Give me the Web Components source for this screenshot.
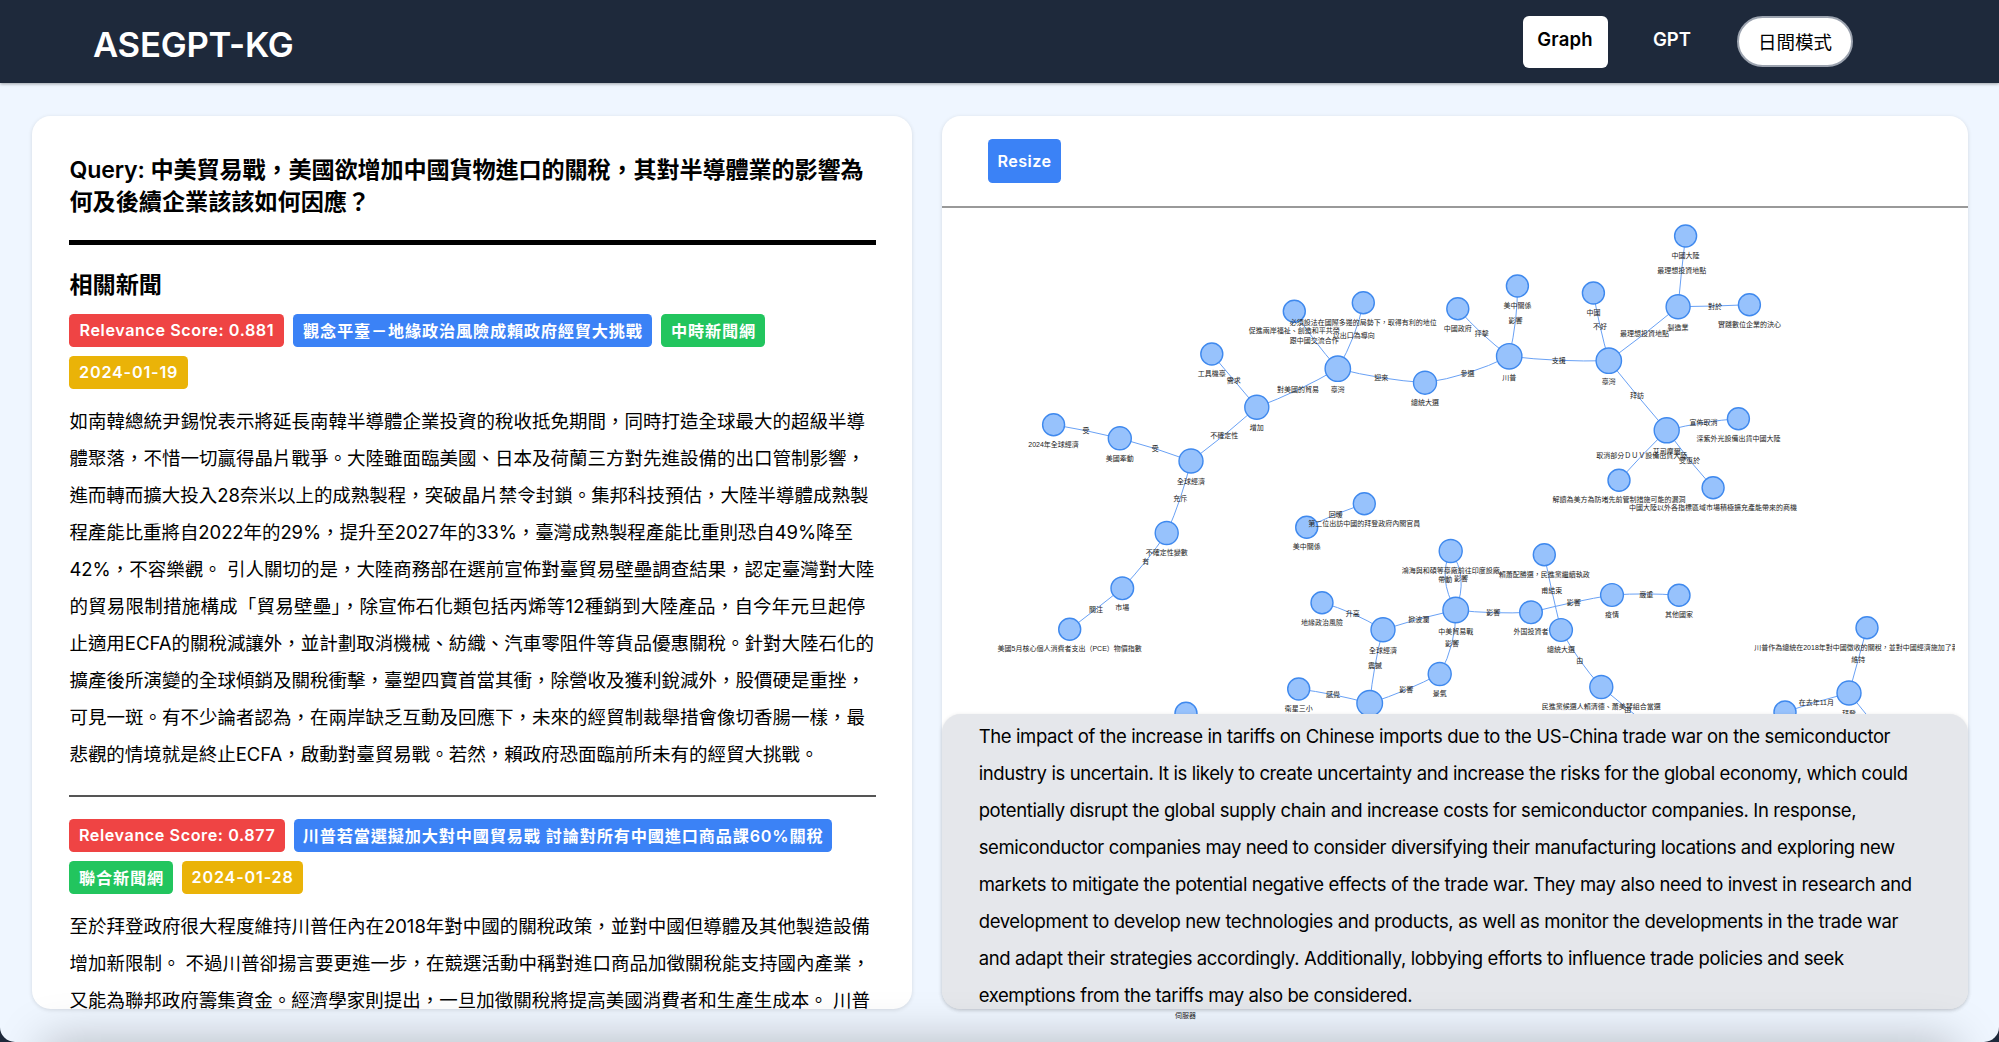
<!DOCTYPE html>
<html lang="zh-Hant">
<head>
<meta charset="utf-8">
<title>ASEGPT-KG</title>
<style>
html{font-size:18.51px}
body{margin:0;width:1999px;height:1042px;overflow:hidden;background:#1e293b;color:#000;font-family:Inter,"Noto Sans CJK TC",sans-serif}
</style>
</head>
<body>
<kg-app></kg-app>
<script>
const define=(name,html,setup)=>customElements.define(name,class extends HTMLElement{
  constructor(){super();const t=document.createElement('template');t.innerHTML=html;this.attachShadow({mode:'open'}).appendChild(t.content.cloneNode(true));}
  connectedCallback(){if(setup)setup.call(this,this.shadowRoot);}
});

/* One line of text; the optional w attribute spreads its letters to that width. */
define('text-line',`<style>:host{display:block;white-space:pre}span{display:inline-block}</style><span><slot></slot></span>`,function(r){
  const w=parseFloat(this.getAttribute('w'));
  if(!w)return;
  const s=r.querySelector('span'),n=[...this.textContent].length;
  s.style.letterSpacing='0px';
  s.style.letterSpacing=((w-s.getBoundingClientRect().width)/n)+'px';
});

define('kg-tag',`<style>
:host{display:flex;align-items:center;justify-content:center;box-sizing:border-box;height:33px;width:var(--w);padding-bottom:1.5px;border-radius:4.6px;color:#fff;font-size:16.2px;font-weight:600;letter-spacing:.81px;white-space:nowrap}
:host([kind=score]){background:#ef4444;letter-spacing:.56px}:host([kind=title]){background:#3b82f6}:host([kind=source]){background:#22c55e}:host([kind=date]){background:#eab308}
</style><slot></slot>`);

define('kg-nav',`<style>
:host{display:flex;align-items:flex-start;justify-content:space-between;box-sizing:border-box;height:83.3px;flex:none;padding:0 146px 0 93px;background:#1e293b;color:#fff;box-shadow:0 1px 3px rgba(0,0,0,.35);position:relative}
.brand{font-size:34.7px;font-weight:600;line-height:42px;padding-top:23px}
nav{display:flex;padding-top:15.7px;font-size:18.51px;font-weight:600}
.on{box-sizing:border-box;width:84.5px;height:52px;border-radius:6px;background:#fff;color:#000;padding:11px 0 0 14.3px;line-height:24px}
.off{padding:11px 0 0 45.5px;line-height:24px;width:84px}
.mode{box-sizing:border-box;width:116px;height:51.5px;border:2.3px solid #9ca3af;border-radius:26px;background:#fff;color:#000;font-weight:400;line-height:48px;text-align:center}
</style>
<div class="brand"><text-line w="200.5">ASEGPT-KG</text-line></div>
<nav><div class="on"><text-line w="55.5">Graph</text-line></div><div class="off"><text-line w="38">GPT</text-line></div><div class="mode">日間模式</div></nav>`);

define('news-item',`<style>
:host{display:block}
.tags{display:flex;flex-wrap:wrap;gap:8.7px 9px}
.body{margin-top:14.4px;font-size:18.51px;line-height:37.02px}
</style><div class="tags"><slot name="tag"></slot></div><div class="body"><slot></slot></div>`);

define('news-panel',`<style>
:host{display:block;box-sizing:border-box;width:880px;height:893px;padding:38px 36px 0 37.4px;background:#fff;border-radius:18.5px;overflow:hidden;box-shadow:0 1px 4px rgba(0,0,0,.12)}
h2{margin:0;font-size:23.14px;line-height:32.4px;font-weight:600}
.bar{height:4.6px;background:#000;margin:21.2px 0 0}
h3{margin:24px 0 0;font-size:23.14px;line-height:32.4px;font-weight:600}
.sep{height:1.8px;background:#555;margin:22px 0 22px}
.first{margin-top:13.2px}
</style>
<h2><text-line w="794">Query: 中美貿易戰，美國欲增加中國貨物進口的關稅，其對半導體業的影響為</text-line><text-line>何及後續企業該該如何因應？</text-line></h2>
<div class="bar"></div>
<h3>相關新聞</h3>
<news-item class="first">
<kg-tag slot="tag" kind="score" style="--w:215px">Relevance Score: 0.881</kg-tag>
<kg-tag slot="tag" kind="title" style="--w:359px">觀念平臺－地緣政治風險成賴政府經貿大挑戰</kg-tag>
<kg-tag slot="tag" kind="source" style="--w:104px">中時新聞網</kg-tag>
<kg-tag slot="tag" kind="date" style="--w:118.5px">2024-01-19</kg-tag>
<text-line>如南韓總統尹錫悅表示將延長南韓半導體企業投資的稅收抵免期間，同時打造全球最大的超級半導</text-line>
<text-line>體聚落，不惜一切贏得晶片戰爭。大陸雖面臨美國、日本及荷蘭三方對先進設備的出口管制影響，</text-line>
<text-line w="799">進而轉而擴大投入28奈米以上的成熟製程，突破晶片禁令封鎖。集邦科技預估，大陸半導體成熟製</text-line>
<text-line w="783.5">程產能比重將自2022年的29%，提升至2027年的33%，臺灣成熟製程產能比重則恐自49%降至</text-line>
<text-line w="804.8">42%，不容樂觀。 引人關切的是，大陸商務部在選前宣佈對臺貿易壁壘調查結果，認定臺灣對大陸</text-line>
<text-line w="796">的貿易限制措施構成「貿易壁壘」，除宣佈石化類包括丙烯等12種銷到大陸產品，自今年元旦起停</text-line>
<text-line w="804.5">止適用ECFA的關稅減讓外，並計劃取消機械、紡織、汽車零阻件等貨品優惠關稅。針對大陸石化的</text-line>
<text-line>擴產後所演變的全球傾銷及關稅衝擊，臺塑四寶首當其衝，除營收及獲利銳減外，股價硬是重挫，</text-line>
<text-line>可見一斑。有不少論者認為，在兩岸缺乏互動及回應下，未來的經貿制裁舉措會像切香腸一樣，最</text-line>
<text-line w="749">悲觀的情境就是終止ECFA，啟動對臺貿易戰。若然，賴政府恐面臨前所未有的經貿大挑戰。</text-line>
</news-item>
<div class="sep"></div>
<news-item>
<kg-tag slot="tag" kind="score" style="--w:215.5px">Relevance Score: 0.877</kg-tag>
<kg-tag slot="tag" kind="title" style="--w:538.5px">川普若當選擬加大對中國貿易戰 討論對所有中國進口商品課60%關稅</kg-tag>
<kg-tag slot="tag" kind="source" style="--w:104px">聯合新聞網</kg-tag>
<kg-tag slot="tag" kind="date" style="--w:120.5px">2024-01-28</kg-tag>
<text-line w="800.5">至於拜登政府很大程度維持川普任內在2018年對中國的關稅政策，並對中國但導體及其他製造設備</text-line>
<text-line>增加新限制。 不過川普卻揚言要更進一步，在競選活動中稱對進口商品加徵關稅能支持國內產業，</text-line>
<text-line w="800.5">又能為聯邦政府籌集資金。經濟學家則提出，一旦加徵關稅將提高美國消費者和生產生成本。 川普</text-line>
</news-item>`);

/* Knowledge graph canvas: coordinates are in page pixels, shifted by the viewBox. */
const nodes={
A:[1053.6,424.7,11,'2024年全球經濟'],B:[1119.8,438.3,11.5,'美國牽動'],C:[1191,461,12,'全球經濟'],D:[1256.8,407.3,12,'增加'],E:[1211.8,354,11,'工具機臺'],
F:[1337.8,368.7,12.7,'臺灣'],G:[1294.3,311.3,11,'促進兩岸福祉、創造和平共榮'],H:[1363.3,302.7,11,'必須設法在國際多邊的局勢下，取得有利的地位'],I:[1425,382.7,11.5,'總統大選'],
J:[1509.2,356.3,12.7,'川普'],K:[1457.8,308.7,11,'中國政府'],L:[1517.4,286,11,'美中關係'],M:[1608.8,360.7,12.7,'臺灣'],N:[1593.4,293,11,'中國'],
O:[1678.1,306.7,12,'製造業'],P:[1685.6,236,11,'中國大陸'],Q:[1749.4,304.7,11,'實踐數位企業的決心'],R:[1666.7,430.3,12.5,'艾司摩爾'],S:[1738.4,418.7,11,'深紫外光設備出貨中國大陸'],
T:[1619,480.3,11,'解讀為美方為防堵先前管制措施可能的漏洞'],U:[1713.1,487.7,11,'中國大陸以外各指標區域市場積極擴充產能帶來的商機'],
V:[1166.7,533,11.5,'不確定性變數'],W:[1122.3,588.3,11.3,'市場'],X:[1069.7,629.3,11,'美國5月核心個人消費者支出（PCE）物價指數'],
Y:[1364.3,503.7,11,'第二位出訪中國的拜登政府內閣官員'],Z:[1306.7,527.3,11,'美中關係'],
a:[1322,602.7,11,'地緣政治風險'],b:[1383,629.7,12,'全球經濟'],c:[1455.7,610,12.8,'中美貿易戰'],d:[1450.7,551,11.5,'鴻海與和碩等臺廠前往印度設廠'],
e:[1531,612.3,11.3,'外国投資者'],f:[1612,595,11.4,'疫情'],g:[1679,595.3,11,'其他國家'],h:[1544.3,554.7,11,'賴蕭配勝選，民進黨繼續執政'],i:[1561,630,11.4,'總統大選'],
j:[1601.3,687,11.5,'民進黨候選人賴清德、蕭美琴組合當選'],k:[1439.7,674,11.5,'景氣'],l:[1369.7,703.3,12.8,''],m:[1298.7,689,11,'衛星三小'],n:[1186,713.3,11,''],
o:[1867,627.7,11,'川普作為總統在2018年對中國徵收的關稅，並對中國經濟施加了新的限制'],p:[1849,693,12,'拜登'],q:[1785,712,11,'']};
const edges=[['A','B','受',1086,430.7],['B','C','受',1155.3,448.7],['C','D','不確定性',1224.3,435],['E','D','需求',1233.8,380],['D','F','對美國的貿易',1298,389.7],
['G','F','跟中國交流合作',1314.3,340],['H','F','以出口為導向',1353.7,335.7],['F','I','迎來',1381.3,377.7],['I','J','參選',1467.5,373],['K','J','抨擊',1481.7,333.3],
['L','J','影響',1515.6,320],['J','M','支援',1558.7,360.3],['N','M','不好',1600,326],['M','O','最理想投資地點',1644.6,333.7],['O','P','最理想投資地點',1681.7,270],['O','Q','對於',1714.9,306],
['M','R','拜訪',1637.1,395.3],['R','S','宣佈取消',1703.5,422.7],['R','T','取消部分ＤＵＶ設備出貨大陸',1641.8,455.7],['R','U','受惠於',1689.6,460.3],
['C','V','充斥',1180.3,498],['V','W','有',1145.7,561.3],['W','X','關注',1096,609],['Y','Z','回暖',1335.7,514.3],['a','b','升高',1352.7,613.7],['b','c','掀波瀾',1418.7,619],
['c','d','帶動',1445.3,579.3],['c','d','影響',1461,578.7],['c','e','影響',1493.3,612.7],['e','f','影響',1573.7,602.3],['f','g','嚴重',1646.3,593.9],['h','i','甫結束',1551.7,590],
['i','j','由',1579.7,660],['c','k','影響',1452,643],['k','l','影響',1406.3,689.7],['b','l','震撼',1375,665.7],['m','l','感覺',1333,694.7],['o','p','維持',1858.3,659.3],['p','q','在去年11月',1816.3,702]];
define('knowledge-graph',`<style>:host{display:block;width:1013px;height:520px;overflow:hidden}svg{display:block}
path,.tail{stroke:#69a1f5;stroke-width:1;fill:none}circle{fill:#97c2fc;stroke:#3f89ee;stroke-width:1.4}text{font:7px "Liberation Sans","Noto Sans CJK TC",sans-serif;fill:#222;text-anchor:middle}</style>
<svg width="1013" height="520" viewBox="942 208 1013 520"></svg>`,function(r){
  let s='';
  for(const [a,b,,x,y] of edges){const p=nodes[a],q=nodes[b];s+=`<path d="M${p[0]} ${p[1]}Q${2*x-(p[0]+q[0])/2} ${2*y-(p[1]+q[1])/2} ${q[0]} ${q[1]}"/>`;}
  s+='<line class="tail" x1="1601.3" y1="687" x2="1640" y2="719"/><line class="tail" x1="1849" y1="693" x2="1870" y2="719"/>';
  for(const k in nodes){const [x,y,rad]=nodes[k];s+=`<circle cx="${x}" cy="${y}" r="${rad}"/>`;}
  for(const k in nodes){const [x,y,rad,t]=nodes[k];if(t)s+=`<text x="${x}" y="${y+rad+10.8}">${t}</text>`;}
  for(const [,,t,x,y] of edges)s+=`<text x="${x}" y="${y+2.6}">${t}</text>`;
  s+='<text x="1627.7" y="711.8">由</text>';
  r.querySelector('svg').innerHTML=s;
});

define('answer-box',`<style>:host{display:block;box-sizing:border-box;height:295.3px;padding:4.6px 0 0 36.7px;border-radius:18.5px;background:#e5e7eb;font-size:18.51px;line-height:37.02px;box-shadow:0 1px 4px rgba(0,0,0,.12);position:relative}</style><slot></slot>`);

define('graph-panel',`<style>
:host{display:flex;flex-direction:column;width:1026px;height:893px;background:#fff;border-radius:18.5px;box-shadow:0 1px 4px rgba(0,0,0,.12);position:relative}
.tools{display:flex;box-sizing:border-box;height:90px;flex:none;padding:22.7px 0 0 46px}
button{border:0;margin:0;padding:0 0 0 9.5px;width:73px;height:44.2px;border-radius:4.6px;background:#3b82f6;color:#fff;font:600 16.2px Inter,sans-serif;text-align:left}
.line{height:2px;background:#999;flex:none}
.canvas{height:505.7px;flex:none;overflow:hidden}
.stray{position:absolute;left:233px;top:895.5px;font-size:7px;line-height:10px;color:#222}
</style>
<div class="tools"><button><text-line w="54">Resize</text-line></button></div>
<div class="line"></div>
<div class="canvas"><knowledge-graph></knowledge-graph></div>
<answer-box>
<text-line w="911.5">The impact of the increase in tariffs on Chinese imports due to the US-China trade war on the semiconductor</text-line>
<text-line w="929">industry is uncertain. It is likely to create uncertainty and increase the risks for the global economy, which could</text-line>
<text-line w="877.5">potentially disrupt the global supply chain and increase costs for semiconductor companies. In response,</text-line>
<text-line w="916">semiconductor companies may need to consider diversifying their manufacturing locations and exploring new</text-line>
<text-line w="933">markets to mitigate the potential negative effects of the trade war. They may also need to invest in research and</text-line>
<text-line w="919.5">development to develop new technologies and products, as well as monitor the developments in the trade war</text-line>
<text-line w="865">and adapt their strategies accordingly. Additionally, lobbying efforts to influence trade policies and seek</text-line>
<text-line w="433.5">exemptions from the tariffs may also be considered.</text-line>
</answer-box>
<div class="stray">伺服器</div>`);

define('kg-app',`<style>
:host{display:flex;flex-direction:column;width:1999px;height:1042px;background:#eff6ff;border-radius:0 0 15px 15px;overflow:hidden;position:relative}
main{display:flex;gap:30px;padding:32.7px 0 0 32px}
.shade{position:absolute;left:50px;right:50px;top:1048px;height:40px;box-shadow:0 0 48px 6px rgba(0,0,0,.26);pointer-events:none}
</style>
<kg-nav></kg-nav>
<main><news-panel></news-panel><graph-panel></graph-panel></main>
<div class="shade"></div>`);
</script>
</body>
</html>
